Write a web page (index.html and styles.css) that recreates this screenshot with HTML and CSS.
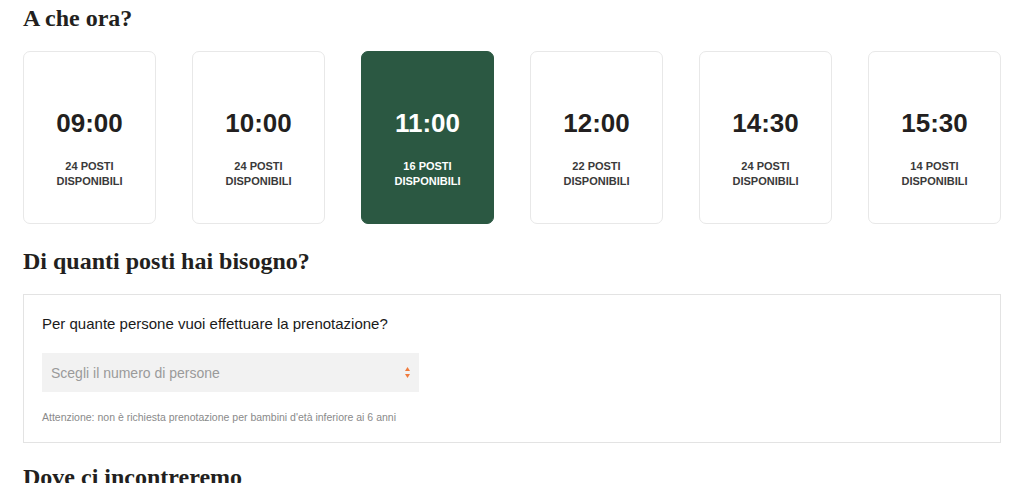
FILE: index.html
```html
<!DOCTYPE html>
<html lang="it">
<head>
  <meta charset="UTF-8">
  <meta name="viewport" content="width=device-width, initial-scale=1.0">
  <title>Prenotazione</title>
  <link rel="stylesheet" href="styles.css">
</head>
<body>
  <h2 class="section-title">A che ora?</h2>

  <!-- Fasce orarie -->
  <div class="slots">
    <div class="slot">
      <div class="slot-time">09:00</div>
      <div class="slot-seats">24 POSTI<br>DISPONIBILI</div>
    </div>
    <div class="slot">
      <div class="slot-time">10:00</div>
      <div class="slot-seats">24 POSTI<br>DISPONIBILI</div>
    </div>
    <div class="slot selected">
      <div class="slot-time">11:00</div>
      <div class="slot-seats">16 POSTI<br>DISPONIBILI</div>
    </div>
    <div class="slot">
      <div class="slot-time">12:00</div>
      <div class="slot-seats">22 POSTI<br>DISPONIBILI</div>
    </div>
    <div class="slot">
      <div class="slot-time">14:30</div>
      <div class="slot-seats">24 POSTI<br>DISPONIBILI</div>
    </div>
    <div class="slot">
      <div class="slot-time">15:30</div>
      <div class="slot-seats">14 POSTI<br>DISPONIBILI</div>
    </div>
  </div>

  <h2 class="section-title">Di quanti posti hai bisogno?</h2>

  <div class="seats-box">
    <div class="seats-label">Per quante persone vuoi effettuare la prenotazione?</div>
    <div class="select">
      <span class="select-placeholder">Scegli il numero di persone</span>
      <span class="select-arrows">
        <svg width="5" height="11" viewBox="0 0 5 11">
          <path d="M2.5 0 L5 4 L0 4 Z" fill="#f07b3d"/>
          <path d="M0 7 L5 7 L2.5 11 Z" fill="#f07b3d"/>
        </svg>
      </span>
    </div>
    <div class="seats-note">Attenzione: non è richiesta prenotazione per bambini d'età inferiore ai 6 anni</div>
  </div>

  <h2 class="section-title">Dove ci incontreremo</h2>
</body>
</html>
```

FILE: styles.css
```css
body {
  margin: 0;
  padding: 4px 23px 0;
  background-color: #fff;
  color: #231f20;
  font-family: "Liberation Sans", Arial, sans-serif;
}

.section-title {
  margin: 0 0 19px;
  font-family: "Liberation Serif", "Times New Roman", serif;
  font-size: 24px;
  font-weight: 700;
  line-height: 28px;
  color: #231f20;
}

/* Fasce orarie */
.slots {
  display: flex;
  gap: 36px;
  margin-bottom: 23px;
}

.slot {
  box-sizing: border-box;
  width: 133px;
  height: 173px;
  padding-top: 56px;
  display: flex;
  flex-direction: column;
  align-items: center;
  border: 1px solid #e8e8e8;
  border-radius: 7px;
  background-color: #fff;
  text-align: center;
}

.slot-time {
  font-size: 26px;
  font-weight: 700;
  line-height: 30px;
  color: #231f20;
}

.slot-seats {
  margin-top: 21px;
  font-size: 11px;
  font-weight: 700;
  line-height: 15px;
  color: #3a3a3a;
}

.slot.selected {
  background-color: #2b5842;
  border-color: #2b5842;
}

.slot.selected .slot-time,
.slot.selected .slot-seats {
  color: #fff;
}

/* Box numero persone */
.seats-box {
  padding: 19px 18px 17px;
  margin-bottom: 20px;
  border: 1px solid #e3e3e3;
}

.seats-label {
  font-size: 15px;
  line-height: 20px;
  color: #1a1a1a;
}

.select {
  box-sizing: border-box;
  width: 377px;
  height: 39px;
  margin-top: 19px;
  padding: 0 8px 0 9px;
  display: flex;
  align-items: center;
  justify-content: space-between;
  background-color: #f2f2f2;
}

.select-placeholder {
  font-size: 14px;
  color: #9a9a9a;
}

.select-arrows {
  display: flex;
  margin-right: 1px;
}

.seats-note {
  margin-top: 18px;
  font-size: 10.5px;
  line-height: 15px;
  color: #8a8a8a;
}
```
